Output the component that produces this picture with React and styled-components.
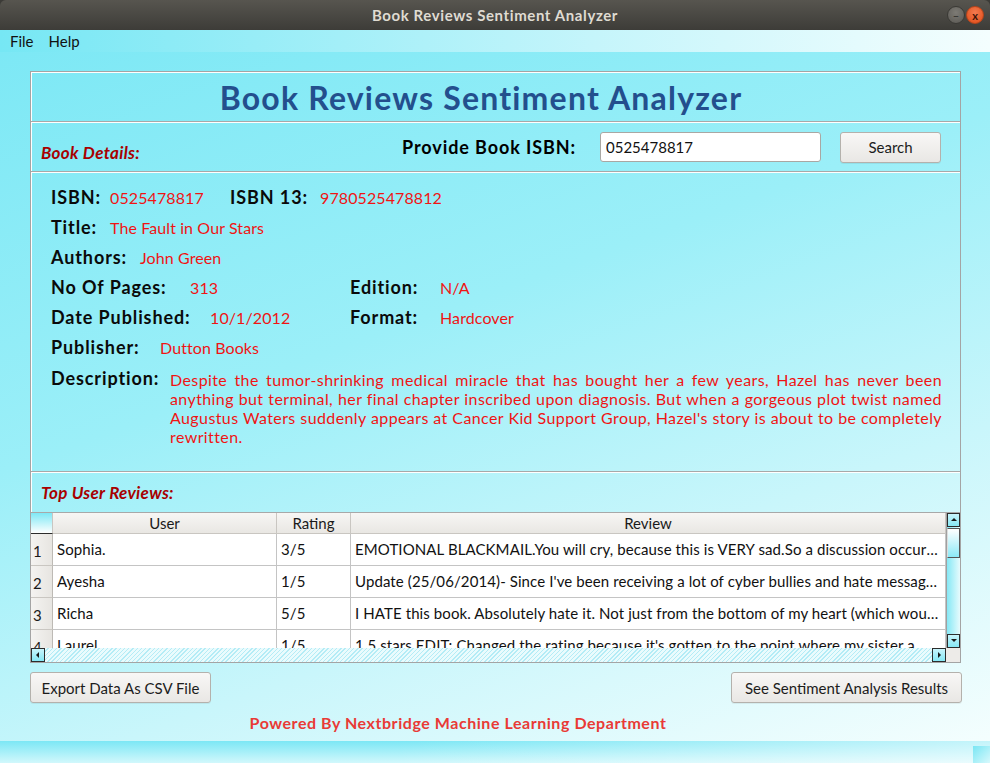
import React from "react";
import styled, { createGlobalStyle } from "styled-components";

const Global = createGlobalStyle`
  html, body { margin: 0; padding: 0; }
  body { font-family: Lato, "Noto Sans", sans-serif; }
  * { box-sizing: border-box; }
`;

const Window = styled.div`
  width: 990px;
  height: 763px;
  display: flex;
  flex-direction: column;
  overflow: hidden;
  background: #3c3b37;
`;

const TitleBar = styled.div`
  height: 30px;
  flex: none;
  display: flex;
  align-items: center;
  justify-content: center;
  position: relative;
  background: linear-gradient(#57554f, #3d3c38);
  border-radius: 6px 6px 0 0;
  color: #dfdbd2;
  font-weight: 700;
  font-size: 15px;
  letter-spacing: 0.6px;
`;

const WinButtons = styled.div`
  position: absolute;
  right: 6px;
  top: 6px;
  display: flex;
  gap: 1px;
`;

const WinBtn = styled.div`
  width: 18px;
  height: 18px;
  border-radius: 50%;
  display: flex;
  align-items: center;
  justify-content: center;
  letter-spacing: 0;
  background: ${(p) =>
    p.$close
      ? "radial-gradient(circle at 50% 35%, #f47a4f, #df4b16)"
      : "radial-gradient(circle at 50% 35%, #7d7b75, #5a5853)"};
  border: 1px solid ${(p) => (p.$close ? "#b8441a" : "#3a3935")};
  color: ${(p) => (p.$close ? "#3c1408" : "#3a3935")};
  font-size: 11px;
  line-height: 1;
  font-weight: 700;
`;

const MenuBar = styled.div`
  height: 22px;
  flex: none;
  display: flex;
  align-items: center;
  gap: 15px;
  padding-left: 10px;
  background: linear-gradient(to right, #76e7f4, #c5f5fb 60%, #f4fefe);
  font-size: 15px;
  color: #111;
`;

const Main = styled.div`
  flex: 1;
  display: flex;
  flex-direction: column;
  padding: 19px 29px 0 30px;
  background: linear-gradient(160deg, #7de8f5 0%, #9beff8 40%, #c9f6fb 70%, #f4fefe 100%);
`;

const Frame = styled.div`
  height: 592px;
  border: 1px solid #a4a4a4;
  box-shadow: inset 1px 1px 0 #ffffff;
  display: flex;
  flex-direction: column;
`;

const Section = styled.div`
  border-bottom: ${(p) => (p.$sep ? "1px solid #a8a8a8" : "none")};
  box-shadow: ${(p) => (p.$sep ? "0 1px 0 #ffffff" : "none")};
  margin-bottom: ${(p) => (p.$sep ? "1px" : "0")};
`;

const AppTitle = styled.h1`
  margin: 0;
  height: 49px;
  display: flex;
  align-items: center;
  justify-content: center;
  font-size: 32px;
  letter-spacing: 1.2px;
  font-weight: 700;
  color: #234f8d;
  padding: 1px 29px 0 0;
`;

const SearchRow = styled.div`
  height: 48px;
  display: flex;
  align-items: center;
  padding: 0 19px 0 10px;
`;

const SectionHeading = styled.div`
  font-style: italic;
  font-weight: 700;
  font-size: 17px;
  letter-spacing: 0.3px;
  color: #a80000;
  padding-top: ${(p) => p.$dy || 0}px;
`;

const SearchLabel = styled.div`
  margin-left: auto;
  font-size: 18px;
  font-weight: 700;
  letter-spacing: 0.9px;
  color: #000;
  margin-right: 24px;
`;

const Input = styled.input`
  width: 221px;
  height: 30px;
  border: 1px solid #a9a7a3;
  border-radius: 3px;
  background: #fff;
  font-family: Lato, sans-serif;
  font-size: 15px;
  padding: 0 5px;
  color: #111;
  margin-right: 19px;
  outline: none;
`;

const Button = styled.button`
  height: 31px;
  width: ${(p) => (p.$w ? p.$w + "px" : "auto")};
  padding: 0 8px;
  border: 1px solid #b4b1ac;
  border-radius: 3px;
  background: linear-gradient(#f8f7f6, #e9e7e4);
  font-family: Lato, sans-serif;
  font-size: 15px;
  color: #1c1c1c;
  box-shadow: 0 1px 0 rgba(0, 0, 0, 0.06);
`;

const Details = styled.div`
  height: 298px;
  padding: 9px 18px 0 20px;
  display: flex;
  flex-direction: column;
`;

const Row = styled.div`
  height: 30px;
  display: flex;
  align-items: center;
`;

const Label = styled.div`
  width: ${(p) => p.$w}px;
  flex: none;
  font-size: 18px;
  font-weight: 700;
  letter-spacing: 0.9px;
  color: #0a0a0a;
`;

const Value = styled.div`
  width: ${(p) => (p.$w ? p.$w + "px" : "auto")};
  flex: none;
  font-size: 16px;
  letter-spacing: 0.1px;
  color: #f01414;
  padding-top: 1px;
`;

const DescRow = styled.div`
  display: flex;
  align-items: flex-start;
  margin-top: 5px;
`;

const DescText = styled.p`
  margin: 3px 0 0;
  flex: 1;
  font-size: 16px;
  letter-spacing: 0.4px;
  line-height: 19px;
  color: #f01414;
  text-align: justify;
`;

const ReviewsHead = styled.div`
  height: 39px;
  display: flex;
  align-items: center;
  padding-left: 10px;
`;

const TableWrap = styled.div`
  flex: 1;
  display: grid;
  grid-template-columns: minmax(0, 1fr) 14px;
  grid-template-rows: minmax(0, 1fr) 14px;
  border-top: 1px solid #a8a8a8;
  overflow: hidden;
`;

const Table = styled.div`
  overflow: hidden;
  background: #fff;
`;

const Grid = styled.div`
  display: grid;
  grid-template-columns: 22px 224px 74px minmax(0, 1fr);
  grid-template-rows: 21px;
  grid-auto-rows: 32px;
`;

const HeadCell = styled.div`
  display: flex;
  align-items: center;
  justify-content: center;
  font-size: 15px;
  color: #1a1a1a;
  background: ${(p) =>
    p.$corner
      ? "linear-gradient(#7fe8f5, #ffffff)"
      : "linear-gradient(#f7f6f4, #e9e7e3)"};
  border-right: 1px solid #c9c6c1;
  border-bottom: 1px solid ${(p) => (p.$corner ? "#2b2b2b" : "#c9c6c1")};
`;

const RowNum = styled.div`
  display: flex;
  align-items: center;
  padding: 3px 0 0 2px;
  font-size: 15px;
  color: #1a1a1a;
  background: linear-gradient(to right, #f4f3f1, #e7e5e1);
  border-right: 1px solid #bdbab5;
  border-bottom: 1px solid #c9c6c1;
`;

const Cell = styled.div`
  display: block;
  line-height: 31px;
  padding: 0 4px;
  font-size: 15px;
  letter-spacing: 0.1px;
  color: #111;
  white-space: nowrap;
  overflow: hidden;
  text-overflow: ellipsis;
  border-right: 1px solid #c4c4c4;
  border-bottom: 1px solid #c4c4c4;
`;

const VScroll = styled.div`
  display: flex;
  flex-direction: column;
  background: linear-gradient(to right, #86e8f5, #e6fbfd);
  border-left: 1px solid #a0a0a0;
`;

const ArrowBtn = styled.div`
  width: ${(p) => (p.$h ? "14px" : "13px")};
  height: 14px;
  flex: none;
  display: flex;
  align-items: center;
  justify-content: center;
  border: 1px solid #2c2c2c;
  background: linear-gradient(#c8f4fb, #86e8f5);
`;

const Handle = styled.div`
  height: 30px;
  flex: none;
  margin-top: 1px;
  border: 1px solid #555;
  border-left-color: #ddd;
  background: linear-gradient(#ffffff, #8ce9f6);
`;

const Spacer = styled.div`
  flex: 1;
`;

const HScroll = styled.div`
  display: flex;
  justify-content: space-between;
  background: repeating-linear-gradient(
    135deg,
    #b4ecf6 0px,
    #b4ecf6 1px,
    #eafbfd 1px,
    #eafbfd 3px
  );
`;

const CornerBox = styled.div`
  background: #edebe8;
`;

const ButtonRow = styled.div`
  display: flex;
  justify-content: space-between;
  margin-top: 9px;
  margin-right: -1px;
`;

const Footer = styled.div`
  margin-top: 10px;
  text-align: center;
  font-size: 16px;
  font-weight: 700;
  letter-spacing: 0.55px;
  color: #e93a36;
  padding-right: 75px;
`;

const StatusBar = styled.div`
  height: 22px;
  flex: none;
  display: flex;
  justify-content: flex-end;
  align-items: flex-end;
  background: linear-gradient(to right, rgba(255, 255, 255, 0) 40%, rgba(255, 255, 255, 0.55)),
    linear-gradient(#7ce7f5, #d2f8fc);
`;

const Grip = styled.div`
  width: 17px;
  height: 17px;
  background: linear-gradient(135deg, #79e6f4, #d8f9fc);
`;

const Tri = ({ dir }) => {
  const pts = {
    up: "1,5 4,2 7,5",
    down: "1,2 4,5 7,2",
    left: "5,1 2,4 5,7",
    right: "3,1 6,4 3,7",
  }[dir];
  return (
    <svg width="8" height="8" viewBox="0 0 8 8">
      <polygon points={pts} fill="#1a1a1a" />
    </svg>
  );
};

const reviews = [
  ["Sophia.", "3/5", "EMOTIONAL BLACKMAIL.You will cry, because this is VERY sad.So a discussion occurred between my friends and me about this book"],
  ["Ayesha", "1/5", "Update (25/06/2014)- Since I've been receiving a lot of cyber bullies and hate messages for this review, I'd like to clarify"],
  ["Richa", "5/5", "I HATE this book. Absolutely hate it. Not just from the bottom of my heart (which would have been enough)"],
  ["Laurel", "1/5", "1.5 stars EDIT: Changed the rating because it's gotten to the point where my sister a"],
];

export default function App() {
  return (
    <>
      <Global />
      <Window>
        <TitleBar>
          Book Reviews Sentiment Analyzer
          <WinButtons>
            <WinBtn>–</WinBtn>
            <WinBtn $close>x</WinBtn>
          </WinButtons>
        </TitleBar>
        <MenuBar>
          <span>File</span>
          <span>Help</span>
        </MenuBar>
        <Main>
          <Frame>
            <Section $sep>
              <AppTitle>Book Reviews Sentiment Analyzer</AppTitle>
            </Section>
            <Section $sep>
              <SearchRow>
                <SectionHeading $dy={10}>Book Details:</SectionHeading>
                <SearchLabel>Provide Book ISBN:</SearchLabel>
                <Input defaultValue="0525478817" />
                <Button $w={101}>Search</Button>
              </SearchRow>
            </Section>
            <Section $sep>
              <Details>
                <Row>
                  <Label $w={59}>ISBN:</Label>
                  <Value $w={120}>0525478817</Value>
                  <Label $w={90}>ISBN 13:</Label>
                  <Value>9780525478812</Value>
                </Row>
                <Row>
                  <Label $w={59}>Title:</Label>
                  <Value>The Fault in Our Stars</Value>
                </Row>
                <Row>
                  <Label $w={89}>Authors:</Label>
                  <Value>John Green</Value>
                </Row>
                <Row>
                  <Label $w={139}>No Of Pages:</Label>
                  <Value $w={160}>313</Value>
                  <Label $w={90}>Edition:</Label>
                  <Value>N/A</Value>
                </Row>
                <Row>
                  <Label $w={159}>Date Published:</Label>
                  <Value $w={140}>10/1/2012</Value>
                  <Label $w={90}>Format:</Label>
                  <Value>Hardcover</Value>
                </Row>
                <Row>
                  <Label $w={109}>Publisher:</Label>
                  <Value>Dutton Books</Value>
                </Row>
                <DescRow>
                  <Label $w={119}>Description:</Label>
                  <DescText>
                    Despite the tumor-shrinking medical miracle that has bought her a few years, Hazel has never been anything but terminal, her final chapter inscribed upon diagnosis. But when a gorgeous plot twist named Augustus Waters suddenly appears at Cancer Kid Support Group, Hazel's story is about to be completely rewritten.
                  </DescText>
                </DescRow>
              </Details>
            </Section>
            <ReviewsHead>
              <SectionHeading>Top User Reviews:</SectionHeading>
            </ReviewsHead>
            <TableWrap>
              <Table>
                <Grid>
                  <HeadCell $corner />
                  <HeadCell>User</HeadCell>
                  <HeadCell>Rating</HeadCell>
                  <HeadCell>Review</HeadCell>
                  {reviews.map((r, i) => (
                    <React.Fragment key={i}>
                      <RowNum>{i + 1}</RowNum>
                      <Cell>{r[0]}</Cell>
                      <Cell>{r[1]}</Cell>
                      <Cell>{r[2]}</Cell>
                    </React.Fragment>
                  ))}
                </Grid>
              </Table>
              <VScroll>
                <ArrowBtn><Tri dir="up" /></ArrowBtn>
                <Handle />
                <Spacer />
                <ArrowBtn><Tri dir="down" /></ArrowBtn>
              </VScroll>
              <HScroll>
                <ArrowBtn $h><Tri dir="left" /></ArrowBtn>
                <ArrowBtn $h><Tri dir="right" /></ArrowBtn>
              </HScroll>
              <CornerBox />
            </TableWrap>
          </Frame>
          <ButtonRow>
            <Button $w={181}>Export Data As CSV File</Button>
            <Button $w={231}>See Sentiment Analysis Results</Button>
          </ButtonRow>
          <Footer>Powered By Nextbridge Machine Learning Department</Footer>
        </Main>
        <StatusBar>
          <Grip />
        </StatusBar>
      </Window>
    </>
  );
}
